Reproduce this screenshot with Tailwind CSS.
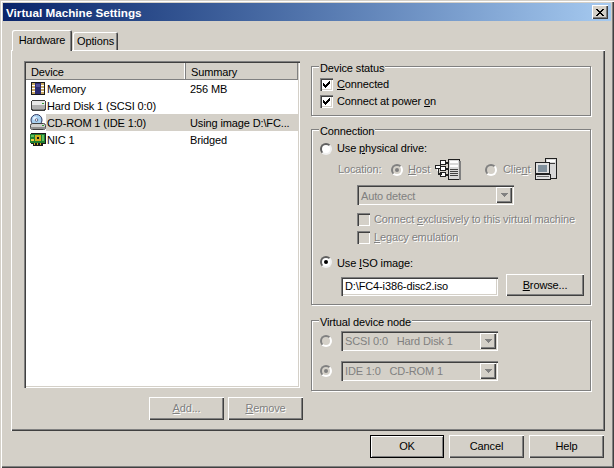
<!DOCTYPE html>
<html>
<head>
<meta charset="utf-8">
<script src="https://cdn.jsdelivr.net/npm/@tailwindcss/browser@4"></script>
</head>
<body class="m-0">
<div class="w-[614px] h-[468px] bg-[#d4d0c8] flex flex-col pt-[3px] px-[3px] overflow-hidden font-['Liberation_Sans',Arial,sans-serif] text-[11px] leading-[13px] tracking-[-0.13px] text-black shadow-[inset_1px_1px_0_#d4d0c8,inset_2px_2px_0_#fff,inset_-1px_-1px_0_#404040,inset_-2px_-2px_0_#808080]">

  <!-- Title bar -->
  <div class="h-[18px] shrink-0 flex items-center justify-between pl-[3px] pr-[3px] bg-gradient-to-r from-[#0a246a] to-[#a6caf0]">
    <span class="font-bold text-white text-[11.7px] tracking-normal">Virtual Machine Settings</span>
    <div class="w-[16px] h-[14px] bg-[#d4d0c8] flex items-center justify-center shadow-[inset_1px_1px_0_#fff,inset_-1px_-1px_0_#404040,inset_-2px_-2px_0_#808080]">
      <svg width="8" height="7" viewBox="0 0 8 7" shape-rendering="crispEdges"><path d="M0 0h2v1h1v1h2V1h1V0h2v1H7v1H6v1H5v1h1v1h1v1h1v1H6V6H5V5H3v1H2v1H0V6h1V5h1V4h1V3H2V2H1V1H0z" fill="#000"/></svg>
    </div>
  </div>

  <!-- Tabs -->
  <div class="ml-[9px] mt-[9px] h-[20px] shrink-0 flex items-end relative z-10">
    <div class="w-[60px] h-[21px] -mb-px bg-[#d4d0c8] flex items-center justify-center rounded-t-[2px] shadow-[inset_1px_1px_0_#fff,inset_-1px_0_0_#404040,inset_-2px_0_0_#808080]">Hardware</div>
    <div class="ml-px w-[45px] h-[18px] flex items-center justify-center rounded-t-[2px] shadow-[inset_1px_1px_0_#fff,inset_-1px_0_0_#404040,inset_-2px_0_0_#808080]">Options</div>
  </div>

  <!-- Panel -->
  <div class="ml-[8px] w-[594px] h-[381px] shrink-0 flex shadow-[inset_1px_1px_0_#fff,inset_-1px_-1px_0_#404040,inset_-2px_-2px_0_#808080]">

    <!-- Left column -->
    <div class="ml-[13px] mt-[11px] w-[279px] shrink-0 flex flex-col">
      <div class="w-[276px] h-[327px] bg-white p-[2px] shadow-[inset_1px_1px_0_#808080,inset_2px_2px_0_#404040,inset_-1px_-1px_0_#fff,inset_-2px_-2px_0_#d4d0c8]">
        <div class="flex h-[17px] bg-[#d4d0c8]">
          <div class="w-[160px] pl-[5px] pt-[2px] flex items-center shadow-[inset_-1px_-1px_0_#808080,inset_-2px_0_0_#fff]">Device</div>
          <div class="flex-1 pl-[5px] pt-[2px] flex items-center shadow-[inset_-1px_-1px_0_#808080]">Summary</div>
        </div>
        <div class="flex h-[17px] items-center">
          <div class="w-[20px] pl-[5px] shrink-0">
            <svg width="15" height="15" viewBox="0 0 15 15" shape-rendering="crispEdges"><rect x="0" y="1" width="14" height="13" fill="#1a1a1a"/><rect x="1" y="2" width="3" height="11" fill="#c8a860"/><rect x="10" y="2" width="3" height="11" fill="#c8a860"/><rect x="1" y="4" width="3" height="1" fill="#fff"/><rect x="1" y="7" width="3" height="1" fill="#fff"/><rect x="1" y="10" width="3" height="1" fill="#fff"/><rect x="10" y="4" width="3" height="1" fill="#fff"/><rect x="10" y="7" width="3" height="1" fill="#fff"/><rect x="10" y="10" width="3" height="1" fill="#fff"/><rect x="4" y="2" width="6" height="11" fill="#2b2b70"/><rect x="5" y="3" width="4" height="3" fill="#50509a"/></svg>
          </div>
          <div class="w-[139px] pl-[1px] pt-[2px]">Memory</div>
          <div class="pl-[5px] pt-[2px]">256 MB</div>
        </div>
        <div class="flex h-[17px] items-center">
          <div class="w-[20px] pl-[5px] shrink-0">
            <svg width="15" height="11" viewBox="0 0 15 11" shape-rendering="crispEdges"><rect x="1" y="0" width="13" height="1" fill="#404040"/><rect x="0" y="1" width="15" height="9" fill="#404040"/><rect x="1" y="10" width="13" height="1" fill="#404040"/><rect x="1" y="1" width="13" height="4" fill="#e8e8e8"/><rect x="1" y="5" width="13" height="4" fill="#b0b0b0"/><rect x="11" y="3" width="2" height="1" fill="#30a030"/><rect x="2" y="9" width="11" height="1" fill="#808080"/></svg>
          </div>
          <div class="w-[139px] pl-[1px] pt-[2px] whitespace-nowrap">Hard Disk 1 (SCSI 0:0)</div>
        </div>
        <div class="flex h-[17px] items-center">
          <div class="w-[20px] pl-[4px] shrink-0 bg-white h-full">
            <svg width="16" height="17" viewBox="0 0 16 17"><circle cx="6.5" cy="6" r="5.5" fill="#a8d0f0" stroke="#303860"/><circle cx="5" cy="4.5" r="2" fill="#e8f4ff"/><circle cx="6.5" cy="6" r="1.3" fill="#fff" stroke="#303860" stroke-width=".7"/><rect x=".5" y="9.5" width="15" height="6" rx="2" fill="#d0d0d0" stroke="#404040"/><rect x="1" y="13" width="14" height="2" fill="#909090"/><rect x="12" y="11" width="2" height="1" fill="#30a030"/></svg>
          </div>
          <div class="flex-1 flex items-center h-full bg-[#d4d0c8]">
            <div class="w-[139px] pl-[1px] pt-[2px] whitespace-nowrap">CD-ROM 1 (IDE 1:0)</div>
            <div class="pl-[5px] pt-[2px] whitespace-nowrap">Using image D:\FC...</div>
          </div>
        </div>
        <div class="flex h-[17px] items-center">
          <div class="w-[20px] pl-[4px] shrink-0">
            <svg width="16" height="14" viewBox="0 0 16 14" shape-rendering="crispEdges"><rect x="1" y="0" width="15" height="11" fill="#1a1a1a"/><rect x="0" y="1" width="15" height="9" fill="#208030"/><rect x="1" y="2" width="3" height="2" fill="#60c060"/><rect x="1" y="6" width="3" height="2" fill="#f0d040"/><rect x="5" y="2" width="6" height="6" fill="#d0b020"/><rect x="7" y="4" width="2" height="2" fill="#1a1a1a"/><rect x="12" y="2" width="2" height="6" fill="#60c060"/><rect x="3" y="10" width="10" height="3" fill="#1a1a1a"/><rect x="4" y="10" width="1" height="2" fill="#d0b020"/><rect x="7" y="10" width="1" height="2" fill="#d0b020"/><rect x="10" y="10" width="1" height="2" fill="#d0b020"/></svg>
          </div>
          <div class="w-[139px] pl-[1px] pt-[2px]">NIC 1</div>
          <div class="pl-[5px] pt-[2px]">Bridged</div>
        </div>
      </div>
      <div class="mt-[9px] flex justify-end gap-[4px]">
        <div class="w-[75px] h-[23px] flex items-center justify-center text-[#808080] [text-shadow:1px_1px_0_#fff] shadow-[inset_1px_1px_0_#fff,inset_-1px_-1px_0_#404040,inset_-2px_-2px_0_#808080]"><span><span class="underline">A</span>dd...</span></div>
        <div class="w-[75px] h-[23px] flex items-center justify-center text-[#808080] [text-shadow:1px_1px_0_#fff] shadow-[inset_1px_1px_0_#fff,inset_-1px_-1px_0_#404040,inset_-2px_-2px_0_#808080]"><span><span class="underline">R</span>emove</span></div>
      </div>
    </div>

    <!-- Right column -->
    <div class="ml-[8px] mt-[16px] w-[281px] shrink-0 flex flex-col">

      <!-- Device status -->
      <div class="relative w-[280px] h-[50px] pl-[8px] pt-[9px] border border-[#808080] shadow-[inset_1px_1px_0_#fff,1px_1px_0_#fff]">
        <span class="absolute left-[7px] -top-[5px] px-px bg-[#d4d0c8]">Device status</span>
        <div class="flex items-center h-[17px]">
          <div class="w-[13px] h-[13px] bg-white flex items-center justify-center shadow-[inset_1px_1px_0_#808080,inset_2px_2px_0_#404040,inset_-1px_-1px_0_#fff,inset_-2px_-2px_0_#d4d0c8]">
            <svg width="7" height="7" viewBox="0 0 7 7" shape-rendering="crispEdges"><path d="M6 0h1v3H6v1H5v1H4v1H3v1H2V6H1V5H0V2h1v1h1v1h1V3h1V2h1V1h1z" fill="#000"/></svg>
          </div>
          <span class="ml-[4px]"><span class="underline">C</span>onnected</span>
        </div>
        <div class="flex items-center h-[17px]">
          <div class="w-[13px] h-[13px] bg-white flex items-center justify-center shadow-[inset_1px_1px_0_#808080,inset_2px_2px_0_#404040,inset_-1px_-1px_0_#fff,inset_-2px_-2px_0_#d4d0c8]">
            <svg width="7" height="7" viewBox="0 0 7 7" shape-rendering="crispEdges"><path d="M6 0h1v3H6v1H5v1H4v1H3v1H2V6H1V5H0V2h1v1h1v1h1V3h1V2h1V1h1z" fill="#000"/></svg>
          </div>
          <span class="ml-[4px]">Connect at power <span class="underline">o</span>n</span>
        </div>
      </div>

      <!-- Connection -->
      <div class="relative mt-[13px] w-[280px] h-[176px] pl-[8px] pt-[10px] border border-[#808080] shadow-[inset_1px_1px_0_#fff,1px_1px_0_#fff]">
        <span class="absolute left-[7px] -top-[5px] px-px bg-[#d4d0c8]">Connection</span>
        <div class="flex items-center h-[17px]">
          <div class="w-[12px] h-[12px] rounded-full bg-white border-2 border-t-[#606060] border-l-[#606060] border-r-[#f0f0f0] border-b-[#f0f0f0]"></div>
          <span class="ml-[5px]">Use <span class="underline">p</span>hysical drive:</span>
        </div>
        <div class="flex items-center h-[23px] mt-px ml-[18px] text-[#808080] [text-shadow:1px_1px_0_#fff]">
          <span class="w-[53px] shrink-0">Location:</span>
          <div class="w-[12px] h-[12px] shrink-0 rounded-full bg-[#d4d0c8] border-2 border-t-[#808080] border-l-[#808080] border-r-white border-b-white flex items-center justify-center"><div class="w-[4px] h-[4px] rounded-full bg-[#808080]"></div></div>
          <span class="ml-[5px] w-[26px] shrink-0"><span class="underline">H</span>ost</span>
          <svg class="shrink-0" width="27" height="23" viewBox="0 0 27 23" shape-rendering="crispEdges"><path d="M6 2h5v4H6zM1 7h5v3H1zM6 8h5v4H6zM6 14h5v4H6zM3 10h1v6h3v-1H4M11 4h3v1h-3zM11 10h3v1h-3zM11 16h3v1h-3z" fill="#fff" stroke="#202020" stroke-width="1"/><rect x="14" y="1" width="12" height="21" fill="#202020"/><rect x="15" y="2" width="10" height="19" fill="#d8d8d8"/><rect x="16" y="3" width="8" height="2" fill="#fff"/><rect x="16" y="7" width="8" height="2" fill="#fff"/><rect x="16" y="11" width="8" height="1" fill="#404040"/><rect x="16" y="13" width="8" height="1" fill="#404040"/><rect x="16" y="15" width="8" height="1" fill="#404040"/><rect x="16" y="17" width="8" height="1" fill="#404040"/><rect x="25" y="3" width="2" height="19" fill="#808080"/></svg>
          <div class="ml-[24px] w-[12px] h-[12px] shrink-0 rounded-full bg-[#d4d0c8] border-2 border-t-[#808080] border-l-[#808080] border-r-white border-b-white"></div>
          <span class="ml-[6px] w-[32px] shrink-0">Clie<span class="underline">n</span>t</span>
          <svg class="shrink-0" width="23" height="23" viewBox="0 0 23 23" shape-rendering="crispEdges"><rect x="10" y="0" width="12" height="21" fill="#202020"/><rect x="11" y="1" width="10" height="19" fill="#d8d8d8"/><rect x="12" y="2" width="8" height="2" fill="#fff"/><rect x="12" y="5" width="8" height="1" fill="#404040"/><rect x="0" y="4" width="15" height="12" fill="#202020"/><rect x="1" y="5" width="13" height="10" fill="#e0e0e0"/><rect x="3" y="7" width="9" height="7" fill="#80909c"/><rect x="0" y="16" width="16" height="6" fill="#202020"/><rect x="1" y="17" width="14" height="4" fill="#e0e0e0"/><rect x="2" y="18" width="12" height="1" fill="#707070"/></svg>
        </div>
        <div class="ml-[37px] mt-[4px] w-[157px] h-[20px] flex items-center justify-between pl-[4px] pr-[2px] text-[#808080] shadow-[inset_1px_1px_0_#808080,inset_2px_2px_0_#404040,inset_-1px_-1px_0_#fff,inset_-2px_-2px_0_#d4d0c8]">
          <span class="pt-[2px]">Auto detect</span>
          <div class="w-[16px] h-[16px] flex items-center justify-center shadow-[inset_1px_1px_0_#fff,inset_-1px_-1px_0_#404040,inset_-2px_-2px_0_#808080]">
            <svg width="7" height="4" viewBox="0 0 7 4" shape-rendering="crispEdges"><path d="M0 0h7v1H6v1H5v1H4v1H3V3H2V2H1V1H0z" fill="#808080"/></svg>
          </div>
        </div>
        <div class="ml-[37px] mt-[6px] h-[16px] flex items-center text-[#808080] [text-shadow:1px_1px_0_#fff]">
          <div class="w-[13px] h-[13px] shadow-[inset_1px_1px_0_#808080,inset_2px_2px_0_#404040,inset_-1px_-1px_0_#fff,inset_-2px_-2px_0_#d4d0c8]"></div>
          <span class="ml-[4px] whitespace-nowrap">Connect <span class="underline">e</span>xclusively to this virtual machine</span>
        </div>
        <div class="ml-[37px] mt-[2px] h-[16px] flex items-center text-[#808080] [text-shadow:1px_1px_0_#fff]">
          <div class="w-[13px] h-[13px] shadow-[inset_1px_1px_0_#808080,inset_2px_2px_0_#404040,inset_-1px_-1px_0_#fff,inset_-2px_-2px_0_#d4d0c8]"></div>
          <span class="ml-[4px]"><span class="underline">L</span>egacy emulation</span>
        </div>
        <div class="flex items-center h-[16px] mt-[9px]">
          <div class="w-[12px] h-[12px] rounded-full bg-white border-2 border-t-[#606060] border-l-[#606060] border-r-[#f0f0f0] border-b-[#f0f0f0] flex items-center justify-center"><div class="w-[4px] h-[4px] rounded-full bg-black"></div></div>
          <span class="ml-[5px] pt-[2px]">Use <span class="underline">I</span>SO image:</span>
        </div>
        <div class="flex items-end h-[22px] mt-[4px] ml-[21px]">
          <div class="w-[157px] h-[19px] bg-white flex items-center pl-[4px] shadow-[inset_1px_1px_0_#808080,inset_2px_2px_0_#404040,inset_-1px_-1px_0_#fff,inset_-2px_-2px_0_#d4d0c8]">D:\FC4-i386-disc2.iso</div>
          <div class="ml-[8px] w-[78px] h-[22px] flex items-center justify-center shadow-[inset_1px_1px_0_#fff,inset_-1px_-1px_0_#404040,inset_-2px_-2px_0_#808080]"><span><span class="underline">B</span>rowse...</span></div>
        </div>
      </div>

      <!-- Virtual device node -->
      <div class="relative mt-[15px] w-[280px] h-[71px] pl-[8px] pt-[10px] border border-[#808080] shadow-[inset_1px_1px_0_#fff,1px_1px_0_#fff]">
        <span class="absolute left-[7px] -top-[5px] px-px bg-[#d4d0c8]">Virtual device node</span>
        <div class="flex items-center h-[20px]">
          <div class="w-[12px] h-[12px] rounded-full bg-[#d4d0c8] border-2 border-t-[#808080] border-l-[#808080] border-r-white border-b-white"></div>
          <div class="ml-[9px] w-[157px] h-[20px] flex items-center justify-between pl-[4px] pr-[2px] text-[#808080] shadow-[inset_1px_1px_0_#808080,inset_2px_2px_0_#404040,inset_-1px_-1px_0_#fff,inset_-2px_-2px_0_#d4d0c8]">
            <span class="whitespace-pre">SCSI 0:0   Hard Disk 1</span>
            <div class="w-[16px] h-[16px] flex items-center justify-center shadow-[inset_1px_1px_0_#fff,inset_-1px_-1px_0_#404040,inset_-2px_-2px_0_#808080]">
              <svg width="7" height="4" viewBox="0 0 7 4" shape-rendering="crispEdges"><path d="M0 0h7v1H6v1H5v1H4v1H3V3H2V2H1V1H0z" fill="#808080"/></svg>
            </div>
          </div>
        </div>
        <div class="flex items-center h-[20px] mt-[10px]">
          <div class="w-[12px] h-[12px] rounded-full bg-[#d4d0c8] border-2 border-t-[#808080] border-l-[#808080] border-r-white border-b-white flex items-center justify-center"><div class="w-[4px] h-[4px] rounded-full bg-[#808080]"></div></div>
          <div class="ml-[9px] w-[157px] h-[20px] flex items-center justify-between pl-[4px] pr-[2px] text-[#808080] shadow-[inset_1px_1px_0_#808080,inset_2px_2px_0_#404040,inset_-1px_-1px_0_#fff,inset_-2px_-2px_0_#d4d0c8]">
            <span class="whitespace-pre">IDE 1:0   CD-ROM 1</span>
            <div class="w-[16px] h-[16px] flex items-center justify-center shadow-[inset_1px_1px_0_#fff,inset_-1px_-1px_0_#404040,inset_-2px_-2px_0_#808080]">
              <svg width="7" height="4" viewBox="0 0 7 4" shape-rendering="crispEdges"><path d="M0 0h7v1H6v1H5v1H4v1H3V3H2V2H1V1H0z" fill="#808080"/></svg>
            </div>
          </div>
        </div>
      </div>
    </div>
  </div>

  <!-- Dialog buttons -->
  <div class="mt-[4px] pr-[7px] flex justify-end gap-[5px]">
    <div class="w-[74px] h-[23px] flex items-center justify-center shadow-[inset_0_0_0_1px_#000,inset_2px_2px_0_#fff,inset_-2px_-2px_0_#808080]">OK</div>
    <div class="w-[75px] h-[23px] flex items-center justify-center shadow-[inset_1px_1px_0_#fff,inset_-1px_-1px_0_#404040,inset_-2px_-2px_0_#808080]">Cancel</div>
    <div class="w-[75px] h-[23px] flex items-center justify-center shadow-[inset_1px_1px_0_#fff,inset_-1px_-1px_0_#404040,inset_-2px_-2px_0_#808080]">Help</div>
  </div>
</div>
</body>
</html>
